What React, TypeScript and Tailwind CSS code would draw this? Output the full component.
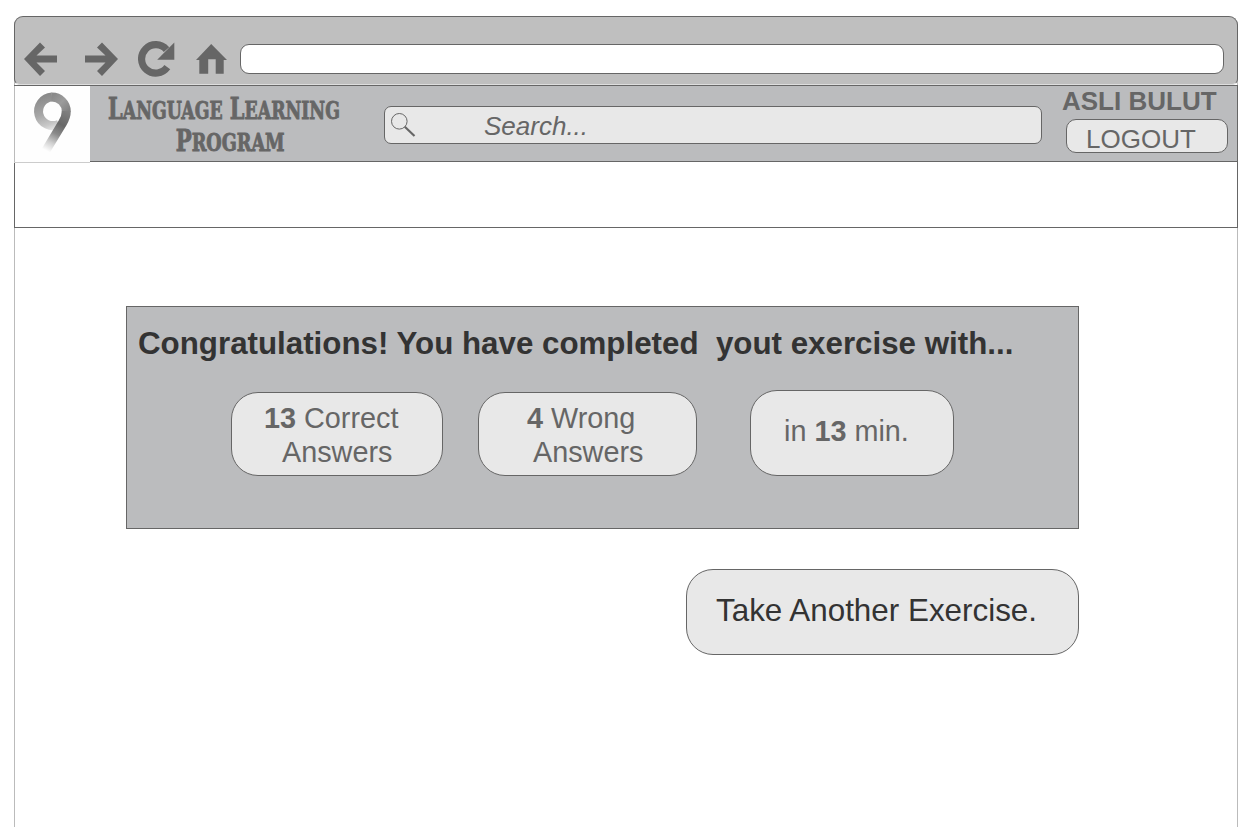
import type { ReactNode } from "react";

function BackIcon() {
  return (
    <svg className="h-[34px] w-[34px]" viewBox="0 0 34 34" fill="#666">
      <path d="M0 17 16 .5 21 5.5 12.5 13.500H33v7H12.500L21 29 16 34Z" />
    </svg>
  );
}

function ReloadIcon() {
  return (
    <svg className="h-[36px] w-[37px]" viewBox="0 0 37 36">
      <path d="M29.300 26.200A14.200 14.200 0 1 1 28.500 8.600" fill="none" stroke="#666" strokeWidth="7.200" />
      <path d="M36.300 1.500V18.700H19.200Z" fill="#666" />
    </svg>
  );
}

function HomeIcon() {
  return (
    <svg className="h-[30px] w-[31px]" viewBox="0 0 31 30" fill="#666">
      <path d="M15.200 0 31 16h-3.300v13.700h-8V15.200h-7.500v14.500H3.300V16H0Z" />
    </svg>
  );
}

function NineLogo() {
  return (
    <svg className="h-[76px] w-[76px]" viewBox="0 0 76 76" fill="none">
      <defs>
        <linearGradient id="tail" gradientUnits="userSpaceOnUse" x1="54" y1="24" x2="33" y2="65">
          <stop offset="0" stopColor="#828282" />
          <stop offset=".35" stopColor="#686868" />
          <stop offset=".58" stopColor="#8a8a8a" />
          <stop offset=".8" stopColor="#d0d0d0" />
          <stop offset="1" stopColor="#fefefe" />
        </linearGradient>
        <linearGradient id="ring" gradientUnits="userSpaceOnUse" x1="30" y1="7" x2="42" y2="45">
          <stop offset="0" stopColor="#868686" />
          <stop offset=".5" stopColor="#a6a6a6" />
          <stop offset=".8" stopColor="#c8c8c8" />
          <stop offset="1" stopColor="#f0f0f0" />
        </linearGradient>
        <linearGradient id="arc" gradientUnits="userSpaceOnUse" x1="38" y1="10" x2="53" y2="26">
          <stop offset="0" stopColor="#8a8a8a" />
          <stop offset=".5" stopColor="#9c9c9c" />
          <stop offset="1" stopColor="#828282" />
        </linearGradient>
      </defs>
      <path d="M45 38.200A14.300 14.300 0 1 1 38 11" stroke="url(#ring)" strokeWidth="9" />
      <path d="M37.500 11A14.500 14.500 0 0 1 52.300 25.500" stroke="url(#arc)" strokeWidth="9" />
      <path d="M52.300 25C52.300 29 51 33 48.500 37L31 66" stroke="url(#tail)" strokeWidth="9" />
    </svg>
  );
}

function SearchIcon() {
  return (
    <svg className="h-[24px] w-[25px]" viewBox="0 0 25 24" fill="none" stroke="#666">
      <circle cx="8.300" cy="8.300" r="7.800" />
      <path d="m13.800 13.800 9.700 9.200" strokeWidth="2.200" />
    </svg>
  );
}

function Result({ className, children }: { className: string; children: ReactNode }) {
  return (
    <div className={`shrink-0 rounded-[27px] border border-[#666] bg-[#e8e8e8] text-[28.800px] leading-[34px] whitespace-nowrap text-[#666] ${className}`}>
      {children}
    </div>
  );
}

export default function App() {
  return (
    <div className="h-[827px] w-[1257px] overflow-hidden bg-white pt-[16px] pl-[14px] font-['Liberation_Sans',sans-serif]">
      <main className="h-[811px] w-[1224px] rounded-t-[9px] border-x border-[#bbb]">
        <div className="-mx-px h-[69px] rounded-t-[9px] rounded-b-[6px] border border-[#666] border-b-[#dedede] bg-[#bfbfbf]">
          <nav className="flex pt-[25px] pl-[9px]">
            <div className="w-[60px] shrink-0"><BackIcon /></div>
            <div className="flex w-[54px] shrink-0"><span className="h-[34px] w-[34px] -scale-x-100"><BackIcon /></span></div>
            <div className="-mt-px w-[58px] shrink-0"><ReloadIcon /></div>
            <div className="w-[44px] shrink-0 pt-[2px]"><HomeIcon /></div>
            <div className="mt-[2px] h-[30px] w-[984px] shrink-0 rounded-[9px] border border-[#666] bg-white" />
          </nav>
        </div>

        <header className="-mx-px flex h-[77px] border border-[#666] bg-[#bbbcbe]">
          <div className="-ml-px h-[76px] w-[76px] shrink-0 border-l border-[#bbb] bg-[#fefefe]"><div className="-ml-px border-b border-[#ccc]"><NineLogo /></div></div>
          <h1 className="flex w-[294px] shrink-0 flex-col items-center pt-[7px] pr-[26px] font-['DejaVu_Serif',serif] leading-[32px] font-bold whitespace-nowrap text-[#666] [-webkit-text-stroke:0.9px_#666]">
            <span className="h-[32px] scale-x-[.72] text-[29px]">L<span className="text-[24px]">ANGUAGE</span> L<span className="text-[24px]">EARNING</span></span>
            <span className="ml-[13px] h-[32px] scale-x-[.735] text-[29px]">P<span className="text-[24px]">ROGRAM</span></span>
          </h1>
          <div className="mt-[20px] flex h-[38px] w-[658px] shrink-0 rounded-[7px] border border-[#666] bg-[#e8e8e8] pt-[6px] pl-[6px]">
            <SearchIcon />
            <span className="-mt-px ml-[68px] text-[26px] leading-[28px] text-[#666] italic">Search...</span>
          </div>
          <div className="ml-[20px] w-[170px] shrink-0 text-[26px] text-[#666]">
            <div className="leading-[30px] font-bold">ASLI BULUT</div>
            <button className="mt-[3px] ml-[4px] block h-[34px] w-[162px] rounded-[10px] border border-[#666] bg-[#e8e8e8] pt-[4px] pl-[19px] text-left leading-[30px]">LOGOUT</button>
          </div>
        </header>

        <div className="-mx-px h-[66px] border-x border-b border-[#666]" />

        <section className="mt-[78px] ml-[111px] h-[223px] w-[953px] border border-[#666] bg-[#bbbcbe]">
          <h2 className="pt-[19px] pl-[11px] text-[31.300px] leading-[36px] font-bold whitespace-pre text-[#333]">
            {"Congratulations! You have completed  yout exercise with..."}
          </h2>
          <div className="mt-[28px] ml-[104px] flex items-end">
            <Result className="h-[84px] w-[212px] pt-[8px] pl-[32px]">
              <p><b>13</b> Correct</p>
              <p className="pl-[18px]">Answers</p>
            </Result>
            <Result className="ml-[35px] h-[84px] w-[219px] pt-[8px] pl-[48px]">
              <p><b>4</b> Wrong</p>
              <p className="pl-[6px]">Answers</p>
            </Result>
            <Result className="ml-[53px] h-[86px] w-[204px] pt-[23px] pl-[33px]">
              <p>in <b>13</b> min.</p>
            </Result>
          </div>
        </section>

        <button className="mt-[40px] ml-[671px] block h-[86px] w-[393px] rounded-[27px] border border-[#666] bg-[#e8e8e8] pb-[3px] pl-[29px] text-left text-[31.400px] whitespace-nowrap text-[#333]">
          Take Another Exercise.
        </button>
      </main>
    </div>
  );
}
